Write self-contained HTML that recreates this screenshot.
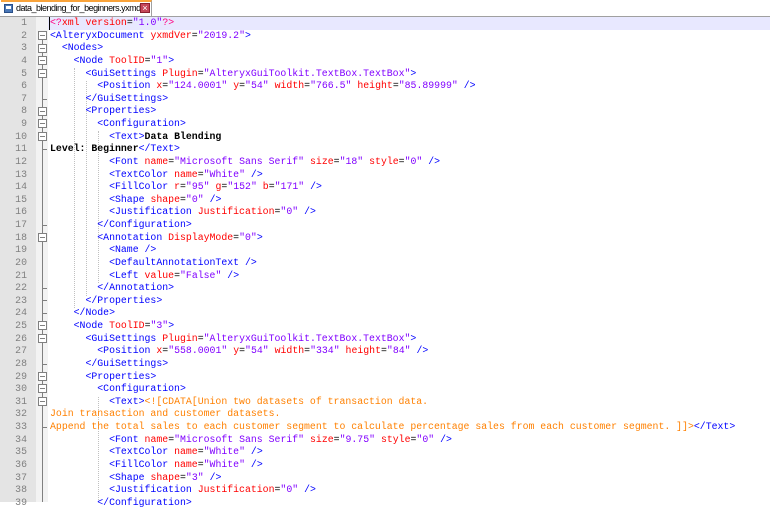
<!DOCTYPE html>
<html><head><meta charset="utf-8"><style>
html,body{margin:0;padding:0;width:770px;height:502px;overflow:hidden;background:#fff;font-family:"Liberation Mono",monospace;}
#tabbar{position:absolute;left:0;top:0;width:770px;height:16px;background:#fff;border-bottom:1px solid #a0a0a0;}
#tab{position:absolute;left:1px;top:0;width:151px;height:16px;background:#fff;border-top:2px solid #f9a33a;border-right:1px solid #a0a0a0;box-sizing:border-box;font-family:"Liberation Sans",sans-serif;font-size:9px;line-height:13px;color:#000;white-space:nowrap;}
#tab .ic{position:absolute;left:3px;top:2px;width:9px;height:9px;background:#4a78b8;border:1px solid #2a4f88;box-sizing:border-box;}
#tab .ic:after{content:"";position:absolute;left:1px;top:1px;width:5px;height:3px;background:#fff;}
#tab .nm{position:absolute;left:15px;top:0;letter-spacing:-0.5px;}
#tab .x{position:absolute;left:139px;top:1px;width:10px;height:10px;background:#c5475a;border:1px solid #8a2030;box-sizing:border-box;color:#fff;font-size:9px;line-height:8px;text-align:center;font-family:"Liberation Sans",sans-serif;}
#gutter{position:absolute;left:0;top:17px;width:36px;height:485px;background:#e4e4e4;}
#fold{position:absolute;left:36px;top:17px;width:12px;height:485px;background:#f3f3f3;}
#vline{position:absolute;left:42px;top:40px;width:1px;height:462px;background:#808080;}
.box{position:absolute;left:38px;width:9px;height:9px;border:1px solid #808080;background:#fff;box-sizing:border-box;}
.box:after{content:"";position:absolute;left:1px;top:3px;width:5px;height:1px;background:#808080;}
.end{position:absolute;left:42px;width:5px;height:1px;background:#808080;}
#hl{position:absolute;left:48px;top:17px;width:722px;height:13px;background:#e8e8ff;}
#caret{position:absolute;left:49px;top:17px;width:1px;height:13px;background:#000;}
#nums{position:absolute;left:0;top:17px;width:27px;text-align:right;font-size:9.85px;line-height:12.63px;color:#808080;white-space:pre;}
#code{position:absolute;left:50px;top:17px;font-size:9.85px;line-height:12.63px;white-space:pre;color:#000;}
.t{color:#0000ff}.a{color:#ff0000}.v{color:#8000ff}.k{font-weight:bold}.c{color:#ff8000}.p{color:#ff0080}
.g{position:absolute;width:0;border-left:1px dotted #c0c0c0;}
</style></head><body>
<div id="tabbar"><div id="tab"><div class="ic"></div><span class="nm">data_blending_for_beginners.yxmd</span><div class="x">×</div></div></div>
<div id="gutter"></div><div id="fold"></div>
<div id="vline"></div>
<div class="box" style="top:31px"></div>
<div class="box" style="top:44px"></div>
<div class="box" style="top:56px"></div>
<div class="box" style="top:69px"></div>
<div class="box" style="top:107px"></div>
<div class="box" style="top:119px"></div>
<div class="box" style="top:132px"></div>
<div class="box" style="top:233px"></div>
<div class="box" style="top:321px"></div>
<div class="box" style="top:334px"></div>
<div class="box" style="top:372px"></div>
<div class="box" style="top:384px"></div>
<div class="box" style="top:397px"></div>
<div class="end" style="top:99px"></div>
<div class="end" style="top:149px"></div>
<div class="end" style="top:225px"></div>
<div class="end" style="top:288px"></div>
<div class="end" style="top:300px"></div>
<div class="end" style="top:313px"></div>
<div class="end" style="top:364px"></div>
<div class="end" style="top:427px"></div>
<div id="hl"></div><div id="caret"></div>
<div class="g" style="left:74px;top:68px;height:240px"></div>
<div class="g" style="left:86px;top:81px;height:215px"></div>
<div class="g" style="left:98px;top:131px;height:152px"></div>
<div class="g" style="left:98px;top:397px;height:105px"></div>
<div id="nums">1
2
3
4
5
6
7
8
9
10
11
12
13
14
15
16
17
18
19
20
21
22
23
24
25
26
27
28
29
30
31
32
33
34
35
36
37
38
39</div>
<div id="code"><span class="p">&lt;?</span><span class="a">xml</span> <span class="a">version</span>=<span class="v">"1.0"</span><span class="p">?&gt;</span>
<span class="t">&lt;AlteryxDocument</span> <span class="a">yxmdVer</span>=<span class="v">"2019.2"</span><span class="t">&gt;</span>
  <span class="t">&lt;Nodes&gt;</span>
    <span class="t">&lt;Node</span> <span class="a">ToolID</span>=<span class="v">"1"</span><span class="t">&gt;</span>
      <span class="t">&lt;GuiSettings</span> <span class="a">Plugin</span>=<span class="v">"AlteryxGuiToolkit.TextBox.TextBox"</span><span class="t">&gt;</span>
        <span class="t">&lt;Position</span> <span class="a">x</span>=<span class="v">"124.0001"</span> <span class="a">y</span>=<span class="v">"54"</span> <span class="a">width</span>=<span class="v">"766.5"</span> <span class="a">height</span>=<span class="v">"85.89999"</span> <span class="t">/&gt;</span>
      <span class="t">&lt;/GuiSettings&gt;</span>
      <span class="t">&lt;Properties&gt;</span>
        <span class="t">&lt;Configuration&gt;</span>
          <span class="t">&lt;Text&gt;</span><span class="k">Data Blending</span>
<span class="k">Level: Beginner</span><span class="t">&lt;/Text&gt;</span>
          <span class="t">&lt;Font</span> <span class="a">name</span>=<span class="v">"Microsoft Sans Serif"</span> <span class="a">size</span>=<span class="v">"18"</span> <span class="a">style</span>=<span class="v">"0"</span> <span class="t">/&gt;</span>
          <span class="t">&lt;TextColor</span> <span class="a">name</span>=<span class="v">"White"</span> <span class="t">/&gt;</span>
          <span class="t">&lt;FillColor</span> <span class="a">r</span>=<span class="v">"95"</span> <span class="a">g</span>=<span class="v">"152"</span> <span class="a">b</span>=<span class="v">"171"</span> <span class="t">/&gt;</span>
          <span class="t">&lt;Shape</span> <span class="a">shape</span>=<span class="v">"0"</span> <span class="t">/&gt;</span>
          <span class="t">&lt;Justification</span> <span class="a">Justification</span>=<span class="v">"0"</span> <span class="t">/&gt;</span>
        <span class="t">&lt;/Configuration&gt;</span>
        <span class="t">&lt;Annotation</span> <span class="a">DisplayMode</span>=<span class="v">"0"</span><span class="t">&gt;</span>
          <span class="t">&lt;Name /&gt;</span>
          <span class="t">&lt;DefaultAnnotationText /&gt;</span>
          <span class="t">&lt;Left</span> <span class="a">value</span>=<span class="v">"False"</span> <span class="t">/&gt;</span>
        <span class="t">&lt;/Annotation&gt;</span>
      <span class="t">&lt;/Properties&gt;</span>
    <span class="t">&lt;/Node&gt;</span>
    <span class="t">&lt;Node</span> <span class="a">ToolID</span>=<span class="v">"3"</span><span class="t">&gt;</span>
      <span class="t">&lt;GuiSettings</span> <span class="a">Plugin</span>=<span class="v">"AlteryxGuiToolkit.TextBox.TextBox"</span><span class="t">&gt;</span>
        <span class="t">&lt;Position</span> <span class="a">x</span>=<span class="v">"558.0001"</span> <span class="a">y</span>=<span class="v">"54"</span> <span class="a">width</span>=<span class="v">"334"</span> <span class="a">height</span>=<span class="v">"84"</span> <span class="t">/&gt;</span>
      <span class="t">&lt;/GuiSettings&gt;</span>
      <span class="t">&lt;Properties&gt;</span>
        <span class="t">&lt;Configuration&gt;</span>
          <span class="t">&lt;Text&gt;</span><span class="c">&lt;![CDATA[Union two datasets of transaction data.</span>
<span class="c">Join transaction and customer datasets.</span>
<span class="c">Append the total sales to each customer segment to calculate percentage sales from each customer segment. ]]&gt;</span><span class="t">&lt;/Text&gt;</span>
          <span class="t">&lt;Font</span> <span class="a">name</span>=<span class="v">"Microsoft Sans Serif"</span> <span class="a">size</span>=<span class="v">"9.75"</span> <span class="a">style</span>=<span class="v">"0"</span> <span class="t">/&gt;</span>
          <span class="t">&lt;TextColor</span> <span class="a">name</span>=<span class="v">"White"</span> <span class="t">/&gt;</span>
          <span class="t">&lt;FillColor</span> <span class="a">name</span>=<span class="v">"White"</span> <span class="t">/&gt;</span>
          <span class="t">&lt;Shape</span> <span class="a">shape</span>=<span class="v">"3"</span> <span class="t">/&gt;</span>
          <span class="t">&lt;Justification</span> <span class="a">Justification</span>=<span class="v">"0"</span> <span class="t">/&gt;</span>
        <span class="t">&lt;/Configuration&gt;</span></div>
</body></html>
